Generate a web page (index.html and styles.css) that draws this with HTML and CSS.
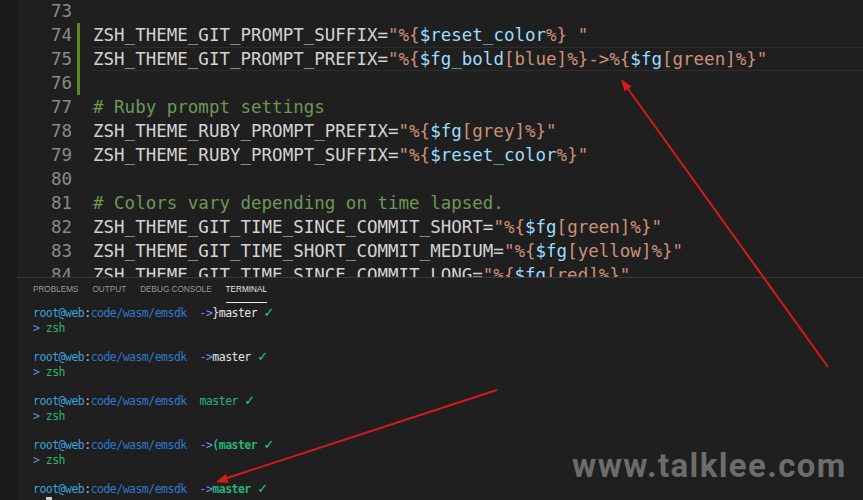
FILE: index.html
```html
<!DOCTYPE html>
<html lang="en">
<head>
  <meta charset="UTF-8">
  <title>zshrc theme</title>
  <link rel="stylesheet" href="styles.css">
</head>
<body>
  <div class="window">
    <div class="activity"></div>
    <div class="main">
      <div class="editor">
        <div class="lines">
          <div class="line"><span class="ln">73</span><span class="mark"></span><span class="code"></span></div>
          <div class="line"><span class="ln">74</span><span class="mark added"></span><span class="code">ZSH_THEME_GIT_PROMPT_SUFFIX=<span class="str">"%{</span><span class="var">$reset_color</span><span class="str">%} "</span></span></div>
          <div class="line"><span class="ln">75</span><span class="mark added"></span><span class="code current">ZSH_THEME_GIT_PROMPT_PREFIX=<span class="str">"%{</span><span class="var">$fg_bold</span><span class="str">[blue]%}-&gt;%{</span><span class="var">$fg</span><span class="str">[green]%}"</span></span></div>
          <div class="line"><span class="ln">76</span><span class="mark added"></span><span class="code"></span></div>
          <div class="line"><span class="ln">77</span><span class="mark"></span><span class="code"><span class="comment"># Ruby prompt settings</span></span></div>
          <div class="line"><span class="ln">78</span><span class="mark"></span><span class="code">ZSH_THEME_RUBY_PROMPT_PREFIX=<span class="str">"%{</span><span class="var">$fg</span><span class="str">[grey]%}"</span></span></div>
          <div class="line"><span class="ln">79</span><span class="mark"></span><span class="code">ZSH_THEME_RUBY_PROMPT_SUFFIX=<span class="str">"%{</span><span class="var">$reset_color</span><span class="str">%}"</span></span></div>
          <div class="line"><span class="ln">80</span><span class="mark"></span><span class="code"></span></div>
          <div class="line"><span class="ln">81</span><span class="mark"></span><span class="code"><span class="comment"># Colors vary depending on time lapsed.</span></span></div>
          <div class="line"><span class="ln">82</span><span class="mark"></span><span class="code">ZSH_THEME_GIT_TIME_SINCE_COMMIT_SHORT=<span class="str">"%{</span><span class="var">$fg</span><span class="str">[green]%}"</span></span></div>
          <div class="line"><span class="ln">83</span><span class="mark"></span><span class="code">ZSH_THEME_GIT_TIME_SHORT_COMMIT_MEDIUM=<span class="str">"%{</span><span class="var">$fg</span><span class="str">[yellow]%}"</span></span></div>
          <div class="line"><span class="ln">84</span><span class="mark"></span><span class="code">ZSH_THEME_GIT_TIME_SINCE_COMMIT_LONG=<span class="str">"%{</span><span class="var">$fg</span><span class="str">[red]%}"</span></span></div>
        </div>
      </div>

      <div class="panel">
        <div class="tabs">
          <span class="tab">Problems</span>
          <span class="tab">Output</span>
          <span class="tab">Debug Console</span>
          <span class="tab active">Terminal</span>
        </div>
        <div class="terminal">
<div class="row"><span class="host">root@web</span><span class="sep">:</span><span class="path">code/wasm/emsdk</span>  <span class="arrow">-&gt;</span><span class="plain">}master</span> <span class="ok">✓</span></div>
<div class="row"><span class="gt">&gt;</span> <span class="cmd">zsh</span></div>
<div class="row"> </div>
<div class="row"><span class="host">root@web</span><span class="sep">:</span><span class="path">code/wasm/emsdk</span>  <span class="arrow">-&gt;</span><span class="plain">master</span> <span class="ok">✓</span></div>
<div class="row"><span class="gt">&gt;</span> <span class="cmd">zsh</span></div>
<div class="row"> </div>
<div class="row"><span class="host">root@web</span><span class="sep">:</span><span class="path">code/wasm/emsdk</span>  <span class="branch">master</span> <span class="ok">✓</span></div>
<div class="row"><span class="gt">&gt;</span> <span class="cmd">zsh</span></div>
<div class="row"> </div>
<div class="row"><span class="host">root@web</span><span class="sep">:</span><span class="path">code/wasm/emsdk</span>  <span class="arrow">-&gt;</span><span class="branch bold">(master</span> <span class="ok bold">✓</span></div>
<div class="row"><span class="gt">&gt;</span> <span class="cmd">zsh</span></div>
<div class="row"> </div>
<div class="row"><span class="host">root@web</span><span class="sep">:</span><span class="path">code/wasm/emsdk</span>  <span class="arrow">-&gt;</span><span class="branch bold">master</span> <span class="ok bold">✓</span></div>
<div class="row">  <span class="cursor"> </span></div>
        </div>
      </div>
    </div>
  </div>

  <div class="watermark">www.talklee.com</div>

  <svg class="arrows" width="863" height="500" viewBox="0 0 863 500">
    <line x1="828" y1="367" x2="626" y2="86" stroke="#d41a1a" stroke-width="2"/>
    <polygon points="621,79 631.5,86.5 624.5,91.5" fill="#d41a1a"/>
    <line x1="497" y1="390" x2="224" y2="479" stroke="#d41a1a" stroke-width="2"/>
    <polygon points="216,482 226,474 228.5,483" fill="#d41a1a"/>
  </svg>
</body>
</html>
```

FILE: styles.css
```css
body {
  margin: 0;
  background-color: #1f1f1f;
  height: 500px;
  overflow: hidden;
  position: relative;
}

.window {
  display: flex;
  height: 500px;
}

.activity {
  width: 17px;
  background-color: #1a1a1a;
  flex-shrink: 0;
}

.main {
  flex: 1;
  display: flex;
  flex-direction: column;
  min-height: 0;
}

/* editor */

.editor {
  height: 277px;
  flex-shrink: 0;
  overflow: hidden;
  border-bottom: 1px solid #3a3a3a;
  font-family: 'DejaVu Sans Mono', monospace;
  font-size: 17.5px;
  color: #d4d4d4;
}

.lines {
  margin-top: -1px;
}

.line {
  display: flex;
  height: 24px;
  line-height: 24px;
  white-space: pre;
}

.ln {
  width: 55px;
  text-align: right;
  color: #8a8a8a;
}

.mark {
  width: 3px;
  margin-left: 5px;
  margin-right: 12px;
}

.mark.added {
  background-color: #5b8a1e;
}

.code {
  flex: 1;
  padding-left: 1px;
}

.code.current {
  border-top: 1px solid #2d2d2d;
  border-bottom: 1px solid #2d2d2d;
  line-height: 22px;
}

.str {
  color: #ce9178;
}

.var {
  color: #9cdcfe;
}

.comment {
  color: #6a9955;
}

/* panel */

.panel {
  flex: 1;
  min-height: 0;
  overflow: hidden;
}

.tabs {
  display: flex;
  gap: 14px;
  padding-left: 16px;
  height: 25px;
}

.tab {
  font-family: 'Liberation Sans', sans-serif;
  font-size: 8.2px;
  text-transform: uppercase;
  color: #9a9a9a;
  line-height: 24px;
  border-bottom: 1px solid transparent;
}

.tab.active {
  color: #e7e7e7;
  border-bottom-color: #e7e7e7;
}

.terminal {
  padding: 3px 0 0 16px;
  font-family: 'DejaVu Sans Mono', monospace;
  font-size: 11.5px;
  letter-spacing: -0.52px;
  line-height: 14.7px;
  color: #cccccc;
}

.row {
  white-space: pre;
  height: 14.7px;
}

.host {
  color: #3aa0d8;
}

.sep {
  color: #cccccc;
}

.path {
  color: #2f7ad0;
}

.arrow {
  color: #6e95e6;
}

.plain {
  color: #e5e5e5;
}

.branch {
  color: #23b57a;
}

.ok {
  color: #23d18b;
  font-family: 'DejaVu Sans', sans-serif;
  font-size: 13px;
  font-weight: bold;
  line-height: 10px;
}

.bold {
  font-weight: bold;
}

.gt {
  color: #5b8fc0;
}

.cmd {
  color: #2cb573;
}

.cursor {
  background-color: #cccccc;
}

/* overlays */

.watermark {
  position: absolute;
  left: 572px;
  top: 446px;
  font-family: Roboto, sans-serif;
  font-weight: 700;
  font-size: 33px;
  letter-spacing: 1.4px;
  color: #6c6c6c;
}

.arrows {
  position: absolute;
  left: 0;
  top: 0;
  pointer-events: none;
}
```
